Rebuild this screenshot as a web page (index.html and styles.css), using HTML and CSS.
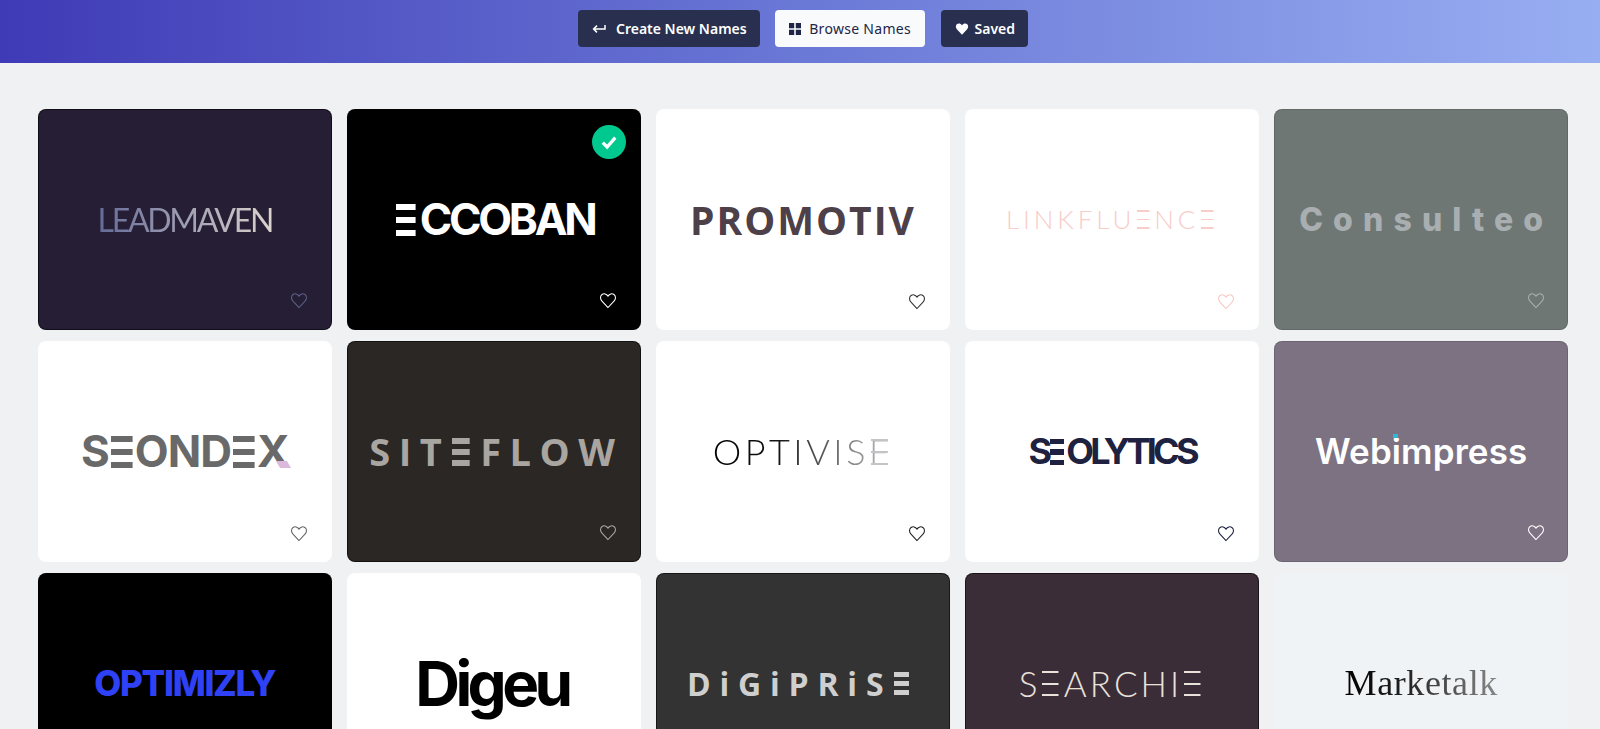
FILE: index.html
```html
<!DOCTYPE html>
<html lang="en">
<head>
    <meta charset="UTF-8">
    <title>Browse Names</title>
    <link rel="stylesheet" href="styles.css">
</head>
<body>
    <svg class="icon-defs" width="0" height="0">
        <symbol id="heart" viewBox="0 0 24 24">
            <path d="M12 22 3.2 12.4C.7 9.6.9 5.6 3.6 3.6 6.2 1.7 9.8 2.4 12 5.8c2.2-3.4 5.8-4.1 8.4-2.2 2.7 2 2.9 6 .4 8.8z"/>
        </symbol>
    </svg>

    <!-- top bar -->
    <header class="top-bar">
        <button class="nav-button">
            <svg class="nav-icon return-icon" viewBox="0 0 14 10"><path d="M13 1v4H2M5 1.600 1.600 5 5 8.400"/></svg>
            Create New Names
        </button>
        <button class="nav-button active">
            <svg class="nav-icon" viewBox="0 0 12 12"><path d="M0 0h5.200v5.200H0zM6.800 0H12v5.200H6.800zM0 6.800h5.200V12H0zM6.800 6.800H12V12H6.800z"/></svg>
            Browse Names
        </button>
        <button class="nav-button saved-button">
            <svg class="nav-icon heart-fill" viewBox="0 0 24 24"><use href="#heart"/></svg>
            Saved
        </button>
    </header>

    <!-- name cards -->
    <main class="name-grid">
        <div class="name-card dark card-leadmaven">
            <span class="logo leadmaven">LEADMAVEN</span>
            <svg class="heart"><use href="#heart"/></svg>
        </div>
        <div class="name-card dark card-eccoban">
            <span class="logo eccoban"><span class="bar-e">E</span>CCOBAN</span>
            <span class="check-badge">
                <svg viewBox="0 0 16 16"><path d="M3 8.500 6.500 12 13 4.500"/></svg>
            </span>
            <svg class="heart"><use href="#heart"/></svg>
        </div>
        <div class="name-card card-promotiv">
            <span class="logo promotiv">PROMOTIV</span>
            <svg class="heart"><use href="#heart"/></svg>
        </div>
        <div class="name-card card-linkfluence">
            <span class="logo linkfluence">LINKFLU<span class="bar-e">E</span>NC<span class="bar-e">E</span></span>
            <svg class="heart"><use href="#heart"/></svg>
        </div>
        <div class="name-card dark card-consulteo">
            <span class="logo consulteo">Consulteo</span>
            <svg class="heart"><use href="#heart"/></svg>
        </div>

        <div class="name-card card-seondex">
            <span class="logo seondex">S<span class="bar-e">E</span>OND<span class="bar-e">E</span><span class="x-mark">X</span></span>
            <svg class="heart"><use href="#heart"/></svg>
        </div>
        <div class="name-card dark card-siteflow">
            <span class="logo siteflow">SIT<span class="bar-e">E</span>FLOW</span>
            <svg class="heart"><use href="#heart"/></svg>
        </div>
        <div class="name-card card-optivise">
            <span class="logo optivise">OPTIVIS<span class="bar-e">E</span></span>
            <svg class="heart"><use href="#heart"/></svg>
        </div>
        <div class="name-card card-seolytics">
            <span class="logo seolytics">S<span class="bar-e">E</span>OLYTICS</span>
            <svg class="heart"><use href="#heart"/></svg>
        </div>
        <div class="name-card dark card-webimpress">
            <span class="logo webimpress">Web<span class="i-dot">i</span>mpress</span>
            <svg class="heart"><use href="#heart"/></svg>
        </div>

        <div class="name-card dark card-optimizly">
            <span class="logo optimizly">OPTIMIZLY</span>
            <svg class="heart"><use href="#heart"/></svg>
        </div>
        <div class="name-card card-digeu">
            <span class="logo digeu">Digeu</span>
            <svg class="heart"><use href="#heart"/></svg>
        </div>
        <div class="name-card dark card-digiprise">
            <span class="logo digiprise">DiGiPRiS<span class="bar-e">E</span></span>
            <svg class="heart"><use href="#heart"/></svg>
        </div>
        <div class="name-card dark card-searchie">
            <span class="logo searchie">S<span class="bar-e">E</span>ARCHI<span class="bar-e">E</span></span>
            <svg class="heart"><use href="#heart"/></svg>
        </div>
        <div class="name-card card-marketalk">
            <span class="logo marketalk">Marketalk</span>
            <svg class="heart"><use href="#heart"/></svg>
        </div>
    </main>
</body>
</html>
```

FILE: styles.css
```css
* {
    margin: 0;
    padding: 0;
    box-sizing: border-box;
}

body {
    font-family: "Noto Sans", "Open Sans", sans-serif;
    background: #f0f1f3;
    height: 100vh;
    overflow: hidden;
}

.icon-defs {
    position: absolute;
}

/* top bar */
.top-bar {
    height: 63px;
    padding: 10px 0 0 6px;
    display: flex;
    justify-content: center;
    gap: 15.500px;
    background: linear-gradient(90deg, #3f3ab6 0%, #6a78d6 50%, #98aef2 100%);
}

.nav-button {
    height: 37px;
    padding: 0 13px 0 14px;
    display: flex;
    align-items: center;
    gap: 8px;
    border: none;
    border-radius: 4px;
    background: #29304f;
    color: #fff;
    font-family: inherit;
    font-size: 14px;
    font-weight: 600;
}

.nav-button.active {
    background: #f9fafc;
    color: #1f2547;
    font-weight: 400;
    letter-spacing: 0.3px;
    padding: 0 14px;
}

.saved-button {
    gap: 6px;
}

.nav-icon {
    width: 12px;
    height: 12px;
    fill: currentColor;
}

.return-icon {
    width: 14px;
    height: 10px;
    margin: 0 2px 0 0;
    fill: none;
    stroke: currentColor;
    stroke-width: 1.500;
}

.heart-fill {
    width: 14px;
    height: 14px;
}

/* cards */
.name-grid {
    padding: 46px 32px 0 38px;
    display: grid;
    grid-template-columns: repeat(5, 1fr);
    grid-auto-rows: 220.500px;
    gap: 11.500px 15.500px;
}

.name-card {
    position: relative;
    display: flex;
    align-items: center;
    justify-content: center;
    background: #fff;
    border-radius: 8px;
    color: #222;
    overflow: hidden;
}

.name-card.dark {
    border: 1px solid rgba(0, 0, 0, 0.55);
}

.card-consulteo.dark,
.card-webimpress.dark {
    border-color: rgba(0, 0, 0, 0.12);
}

.heart {
    position: absolute;
    right: 23.500px;
    bottom: 20px;
    width: 18px;
    height: 17px;
    fill: none;
    stroke: currentColor;
    stroke-width: 1.500;
}

.dark .heart {
    right: 22.500px;
}

.check-badge {
    position: absolute;
    top: 15px;
    right: 14px;
    width: 34px;
    height: 34px;
    display: flex;
    align-items: center;
    justify-content: center;
    border-radius: 50%;
    background: #00c98f;
}

.check-badge svg {
    width: 20px;
    height: 20px;
    fill: none;
    stroke: #fff;
    stroke-width: 2.600;
}

/* logos */
.logo {
    --ink: #222;
    --track: 0px;
    color: var(--ink);
    letter-spacing: var(--track);
    white-space: nowrap;
    line-height: 1;
}

/* E drawn as three bars, the letter stays in the text */
.bar-e {
    --bar: 20%;
    display: inline-block;
    line-height: 0.72em;
    color: transparent;
    -webkit-text-fill-color: transparent;
    background: linear-gradient(var(--ink) 0 var(--bar), transparent var(--bar) calc(50% - var(--bar) / 2), var(--ink) calc(50% - var(--bar) / 2) calc(50% + var(--bar) / 2), transparent calc(50% + var(--bar) / 2) calc(100% - var(--bar)), var(--ink) calc(100% - var(--bar)));
    background-size: calc(100% - max(0px, var(--track)) - 0.1em) 100%;
    background-position: 0.05em 0;
    background-repeat: no-repeat;
}

.card-leadmaven { background: #251e35; color: #5d5f84; }
.leadmaven {
    --track: -2.300px;
    font: 400 32px Lato, sans-serif;
    background: linear-gradient(90deg, #656b98, #dbd3cc);
    -webkit-background-clip: text;
    -webkit-text-fill-color: transparent;
}

.card-eccoban { background: #000; color: #fff; }
.eccoban {
    --ink: #fff;
    --track: -3.300px;
    font: 700 44px Inter, sans-serif;
}
.eccoban .bar-e { margin-right: 3px; }

.card-promotiv { color: #333; }
.promotiv {
    --ink: #4d4049;
    --track: 2px;
    font: 700 39px "Open Sans", sans-serif;
}

.card-linkfluence { color: #f8c9c4; }
.linkfluence {
    --ink: #f8cdc8;
    --track: 3.900px;
    font: 300 26px Lato, sans-serif;
}
.linkfluence .bar-e { --bar: 8%; }

.card-consulteo { background: #6f7775; color: #a8aeae; }
.consulteo {
    --ink: #a9afb1;
    --track: 10.100px;
    font: 800 32px Inter, sans-serif;
    padding-left: 10px;
}

.card-seondex { color: #666; }
.seondex {
    --ink: #696969;
    --track: -0.900px;
    font: 700 44px Inter, sans-serif;
}

.x-mark {
    position: relative;
}

.x-mark::after {
    content: "";
    position: absolute;
    right: 0;
    bottom: 10.500px;
    width: 11px;
    height: 7px;
    background: #dcb9dc;
    transform: skewX(30deg);
}

.card-siteflow { background: #2b2724; color: #a9a5a0; }
.siteflow {
    --ink: #a9a5a0;
    --track: 8.500px;
    font: 700 38px "Open Sans", sans-serif;
    padding-left: 5px;
}

.card-optivise { color: #222; }
.optivise {
    --ink: #c4c4c8;
    --track: 3.500px;
    font: 300 36px Lato, sans-serif;
    background: linear-gradient(90deg, #000 0%, #111 35%, #c4c4c8 100%);
    -webkit-background-clip: text;
    -webkit-text-fill-color: transparent;
}
.optivise .bar-e { --bar: 7%; }

.card-seolytics { color: #1e2140; }
.seolytics {
    --ink: #1e2140;
    --track: -3.800px;
    font: 700 36px Inter, sans-serif;
}

.card-webimpress { background: #7c7282; color: #fff; }
.webimpress {
    --ink: #fff;
    --track: 0.100px;
    font: 600 35px Inter, sans-serif;
}

.i-dot {
    position: relative;
}

.i-dot::after {
    content: "";
    position: absolute;
    left: 1.500px;
    top: 4px;
    width: 5px;
    height: 4px;
    background: #2fb6dc;
}

.card-optimizly { background: #000; color: #fff; }
.optimizly {
    --ink: #2f41f5;
    --track: -1.300px;
    font: 800 35px Inter, sans-serif;
}

.card-digeu { color: #222; }
.digeu {
    --ink: #000;
    --track: -4.600px;
    font: 700 62px Inter, sans-serif;
    margin-right: 4px;
}

.card-digiprise { background: #333; color: #ccc; }
.digiprise {
    --ink: #cfcfcf;
    --track: 8.800px;
    font: 700 32px "Open Sans", sans-serif;
}

.card-searchie { background: #3b2d38; color: #e8e2da; }
.searchie {
    --ink: #e8e2da;
    --track: 3px;
    font: 300 35px Lato, sans-serif;
}
.searchie .bar-e { --bar: 8%; }

.card-marketalk { background: #f0f3f6; color: #777; }
.marketalk {
    --track: 0.600px;
    font: 400 36px "Liberation Serif", serif;
    background: linear-gradient(90deg, #000 0%, #222 40%, #888 100%);
    -webkit-background-clip: text;
    -webkit-text-fill-color: transparent;
}
```
